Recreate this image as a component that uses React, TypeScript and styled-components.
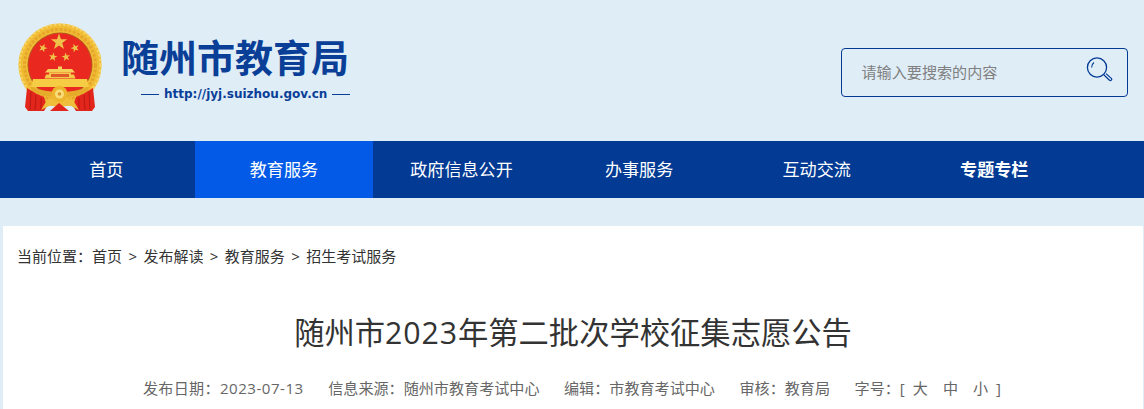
import React from "react";
import styled, { createGlobalStyle } from "styled-components";

const Global = createGlobalStyle`
  html, body { margin: 0; padding: 0; background: #dfedf7; overflow: hidden; }
  body { font-family: "Open Sans", "Noto Sans CJK SC", sans-serif; }
`;
const Page = styled.div`width: 1144px; height: 409px; overflow: hidden; display: flex; flex-direction: column;`;
const Header = styled.header`height: 141px; display: flex; justify-content: space-between; align-items: flex-start; padding: 22px 16px 0 17px; box-sizing: border-box;`;
const Brand = styled.div`display: flex; gap: 18px;`;
const BrandText = styled.div`display: flex; flex-direction: column; padding-top: 9px;`;
const SiteName = styled.div`font-size: 38px; line-height: 50px; font-weight: 700; color: #0a3f97; white-space: nowrap; font-family: "Noto Sans CJK SC", sans-serif;`;
const UrlRow = styled.div`display: flex; align-items: center; gap: 5px; margin: 5px 0 0 18px; padding-left: 2px; color: #0a3f97; font: 700 12px/16px "DejaVu Sans", sans-serif;`;
const Dash = styled.i`width: 18px; height: 1px; background: #0a3f97;`;
const Search = styled.div`width: 287px; height: 49px; margin-top: 26px; border: 1px solid #023a94; border-radius: 4px; box-sizing: border-box; display: flex; align-items: center; justify-content: space-between; padding: 0 14px 3px 19.5px; color: #808080; font-size: 15.1px;`;
const Nav = styled.nav`height: 57px; background: #023a94; display: flex; padding-left: 17.5px;`;
const NavItem = styled.a<{ $active?: boolean; $bold?: boolean }>`
  width: 177.6px; padding-bottom: 2px; box-sizing: border-box; display: flex; align-items: center; justify-content: center; color: #fff; font-size: 17.1px;
  font-weight: ${p => (p.$bold ? 700 : 400)};
  background: ${p => (p.$active ? "#025ae6" : "transparent")};
`;
const Panel = styled.main`flex: 1; margin: 28px 1px 0 3px; background: #fff; padding: 19px 14px 0; display: flex; flex-direction: column;`;
const Crumbs = styled.div`display: flex; gap: 6.4px; font-size: 15px; line-height: 22px; color: #333; white-space: nowrap;`;
const Title = styled.h1`margin: 43px 0 0; font-size: 30.3px; line-height: 46px; font-weight: 400; color: #333; text-align: center; white-space: nowrap;`;
const TitleNum = styled.span`letter-spacing: 0.9px;`;
const Meta = styled.div`margin-top: 21px; display: flex; justify-content: center; gap: 24.5px; font-size: 15.1px; line-height: 22px; color: #666; white-space: nowrap;`;
const MetaNum = styled.span`letter-spacing: 0.5px;`;
const MetaLabel = styled.span`margin-left: -2px; letter-spacing: 0.3px;`;
const Sizes = styled.span`display: inline-flex; gap: 15px; margin: 0 8px;`;
const EmblemSvg = styled.svg`display: block; filter: blur(0.35px);`;
const GlassSvg = styled.svg`display: block; margin-bottom: 3px;`;

const Star = ({ x, y, r, rot = 0 }: { x: number; y: number; r: number; rot?: number }) => {
  const pts = Array.from({ length: 10 }, (_, i) => {
    const a = ((i * 36 - 90 + rot) * Math.PI) / 180;
    const d = i % 2 ? r * 0.4 : r;
    return `${(x + d * Math.cos(a)).toFixed(2)},${(y + d * Math.sin(a)).toFixed(2)}`;
  }).join(" ");
  return <polygon points={pts} fill="#efc24a" />;
};

const Emblem = () => (
  <EmblemSvg width="86" height="90" viewBox="0 0 86 90">
    <circle cx="43" cy="43" r="41.5" fill="#f0bd35" />
    <circle cx="43" cy="43" r="40.5" fill="none" stroke="#f8d468" strokeWidth="2.4" strokeDasharray="2.5 2" />
    <circle cx="43" cy="43" r="35.5" fill="none" stroke="#e6a52b" strokeWidth="3" strokeDasharray="3 1.5" />
    <circle cx="43" cy="43" r="32.5" fill="#b9571f" />
    <circle cx="43" cy="43" r="31.5" fill="#e9291f" />
    <Star x={42} y={20} r={8.5} />
    <Star x={26} y={26} r={4.5} rot={20} />
    <Star x={58} y={26} r={4.5} rot={-20} />
    <Star x={36} y={35} r={4.5} rot={10} />
    <Star x={49} y={35} r={4.5} rot={-10} />
    <path d="M31 47h24l3 3.5H28Z" fill="#f4cf5a" />
    <rect x="41" y="44.5" width="4" height="3" fill="#f4cf5a" />
    <path d="M32 50.5h22v2h3l1.5 4H27.5l1.5-4h3Z" fill="#f3c84a" />
    <rect x="34" y="52" width="18" height="3" fill="#df5a2a" />
    <path d="M16 57h54l2 8H14Z" fill="#f6cc45" />
    <path d="M14 65Q43 75 72 65L71 69Q43 82 15 69Z" fill="#e7ab2c" />
    <path d="M10 66L20 72L27 75L30 84L27 89H11L8 85Z" fill="#e3261c" />
    <path d="M76 66L66 72L59 75L56 84L59 89H75L78 85Z" fill="#e3261c" />
    <path d="M14 70L13 88M19 73L18 88M24 76L24 88M72 70L73 88M67 73L68 88M62 76L62 88" stroke="#b51712" strokeWidth="0.9" />
    <path d="M24 88L30 78L43 74L56 78L62 88L54 84H32Z" fill="#efbe3a" />
    <path d="M33 89L42 81L52 89Z" fill="#e3261c" />
    <circle cx="42.5" cy="72" r="8" fill="#edb52e" />
    <circle cx="42.5" cy="72" r="4.5" fill="#f8dc78" />
    <circle cx="42.5" cy="72" r="1.8" fill="#d9942a" />
  </EmblemSvg>
);

const SearchIcon = () => (
  <GlassSvg width="28" height="28" viewBox="0 0 28 28" fill="none" stroke="#023a94">
    <circle cx="12" cy="11.5" r="9.6" strokeWidth="1.3" />
    <path d="M6.6 11.5C6.6 9 7.6 7.5 9 6.5" strokeWidth="1.1" />
    <path d="M19 19l5.5 5.2a1.2 1.2 0 0 0 1.8-1.8L21 17.6" strokeWidth="1.2" />
  </GlassSvg>
);

const navItems = ["首页", "教育服务", "政府信息公开", "办事服务", "互动交流", "专题专栏"];
const crumbs = ["当前位置：首页", ">", "发布解读", ">", "教育服务", ">", "招生考试服务"];

export default function App() {
  return (
    <Page>
      <Global />
      <Header>
        <Brand>
          <Emblem />
          <BrandText>
            <SiteName>随州市教育局</SiteName>
            <UrlRow><Dash />http://jyj.suizhou.gov.cn<Dash /></UrlRow>
          </BrandText>
        </Brand>
        <Search>请输入要搜索的内容<SearchIcon /></Search>
      </Header>
      <Nav>
        {navItems.map((t, i) => (
          <NavItem key={t} $active={i === 1} $bold={i === 5}>{t}</NavItem>
        ))}
      </Nav>
      <Panel>
        <Crumbs>{crumbs.map((c, i) => <span key={i}>{c}</span>)}</Crumbs>
        <Title>随州市<TitleNum>2023</TitleNum>年第二批次学校征集志愿公告</Title>
        <Meta>
          <span><MetaLabel>发布日期：</MetaLabel><MetaNum>2023-07-13</MetaNum></span>
          <span>信息来源：随州市教育考试中心</span>
          <span>编辑：市教育考试中心</span>
          <span>审核：教育局</span>
          <span>字号：[<Sizes><span>大</span><span>中</span><span>小</span></Sizes>]</span>
        </Meta>
      </Panel>
    </Page>
  );
}
